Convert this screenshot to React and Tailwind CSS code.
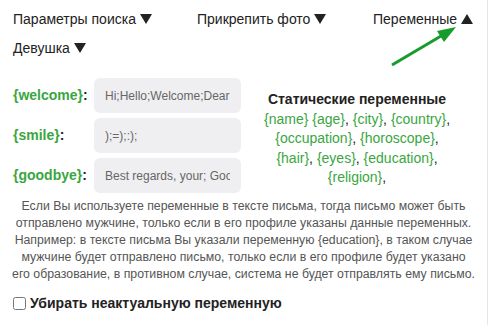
import { useState } from 'react'

const Caret = ({ up }) => (
  <svg width="12" height="10" viewBox="0 0 12 10" className="inline-block ml-[4px] align-[0px]">
    <path d={up ? 'M0 10 L6 0 L12 10 Z' : 'M0 0 L12 0 L6 10 Z'} fill="#222" />
  </svg>
)

const fields = [
  { name: 'welcome', value: 'Hi;Hello;Welcome;Dear' },
  { name: 'smile', value: ');=);:);' },
  { name: 'goodbye', value: 'Best regards, your; Good bye' },
]

const statics = ['name', 'age', 'city', 'country', 'occupation', 'horoscope', 'hair', 'eyes', 'education', 'religion']

export default function App() {
  const [remove, setRemove] = useState(false)

  return (
    <div className="relative w-[488px] h-[325px] bg-white border-r border-[#e6e6e6] text-[#222] font-['Liberation_Sans',Arial,sans-serif] overflow-hidden">
      {/* меню */}
      <div className="flex items-center h-[38px] pl-[13px] text-[14px] whitespace-nowrap">
        <span className="w-[184px]">Параметры поиска<Caret /></span>
        <span className="w-[176px]">Прикрепить фото<Caret /></span>
        <span>Переменные<Caret up /></span>
      </div>
      <div className="pl-[13px] text-[14px] h-[24px] leading-[20px]">
        Девушка<Caret />
      </div>

      {/* стрелка */}
      <svg className="absolute left-[380px] top-[20px]" width="80" height="50" viewBox="0 0 80 50">
        <line x1="12" y1="45" x2="61" y2="16" stroke="#169c2a" strokeWidth="3" />
        <path d="M76 7 L57 11 L64 22 Z" fill="#169c2a" />
      </svg>

      <div className="flex mt-[16px]">
        <div className="flex flex-col gap-[5px] pl-[13px]">
          {fields.map(f => (
            <div key={f.name} className="flex items-center">
              <div className="w-[81px] font-bold text-[14px]">
                <span className="text-[#3aa63f]">{'{' + f.name + '}'}</span>:
              </div>
              <input
                readOnly
                value={f.value}
                className="w-[147px] h-[35px] rounded-[6px] bg-[#efeff1] px-[11px] text-[12px] text-[#666] outline-none"
              />
            </div>
          ))}
        </div>
        <div className="w-[224px] ml-[4px] text-center pt-[12px] text-[14px] leading-[19.5px]">
          <div className="font-bold">Статические переменные</div>
          <div className="px-[17px]">
            {statics.map((s, i) => (
              <span key={s}>
                <span className="text-[#3aa63f]">{'{' + s + '}'}</span>
                {i === 0 ? ' ' : ', '}
              </span>
            ))}
          </div>
        </div>
      </div>

      <p className="mt-[5px] px-[10px] text-center text-[12.3px] leading-[17px] text-[#555]">
        Если Вы используете переменные в тексте письма, тогда письмо может быть отправлено мужчине, только если в его профиле указаны данные переменных. Например: в тексте письма Вы указали переменную {'{education}'}, в таком случае мужчине будет отправлено письмо, только если в его профиле будет указано<br />
        его образование, в противном случае, система не будет отправлять ему письмо.
      </p>

      <label className="flex items-center gap-[4px] mt-[10px] pl-[13px] text-[14px] font-bold">
        <input type="checkbox" checked={remove} onChange={e => setRemove(e.target.checked)} className="w-[13px] h-[13px]" />
        Убирать неактуальную переменную
      </label>
    </div>
  )
}
